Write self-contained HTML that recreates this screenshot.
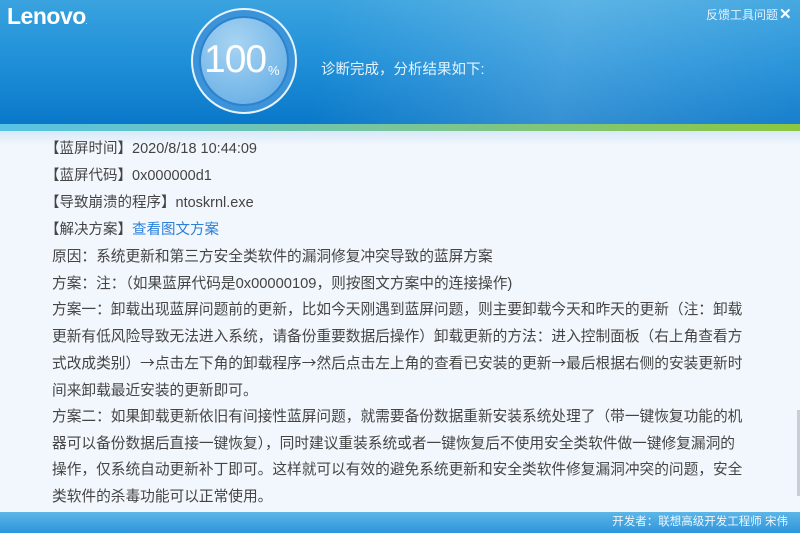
<!DOCTYPE html>
<html><head><meta charset="utf-8"><style>
*{margin:0;padding:0;box-sizing:border-box}
body{width:800px;height:533px;overflow:hidden;background:#f2f7fd;font-family:"Liberation Sans","Noto Sans CJK SC",sans-serif;position:relative}
.hdr{position:absolute;left:0;top:0;width:800px;height:124px;background:linear-gradient(180deg,#3aa3df 0%,#1f8fd8 50%,#0a78c9 100%);overflow:hidden}
.hdr:before{content:"";position:absolute;inset:0;background:linear-gradient(100deg,rgba(255,255,255,0) 40%,rgba(255,255,255,.18) 70%,rgba(255,255,255,.05) 100%)}
.strip{position:absolute;left:0;top:124px;width:800px;height:7px;background:linear-gradient(90deg,#58c3e6,#79c59a 50%,#8cc63f)}
.shade{position:absolute;left:0;top:131px;width:800px;height:14px;background:linear-gradient(#d8e8f8,#f2f7fd)}
.logo{position:absolute;left:7px;top:3px;color:#fff;font-size:23px;font-weight:bold;letter-spacing:-0.5px}
.fb{position:absolute;left:706px;top:6px;color:#e4f2fc;font-size:12px}
.x{position:absolute;left:779px;top:5px;color:#fff;font-size:15px;font-weight:bold}
.ring{position:absolute;left:191px;top:8px;width:106px;height:106px;border-radius:50%;border:2px solid #e8f4fc;background:#3b93da}
.inner{position:absolute;left:199px;top:16px;width:90px;height:90px;border-radius:50%;background:radial-gradient(circle at 40% 30%,#a8d4f2,#73b6e8 70%,#5aa6e0);border:2px solid #2d82cc}
.num{position:absolute;left:204px;top:38px;color:#fff;font-size:39px;letter-spacing:-1px}
.pct{position:absolute;left:268px;top:63px;color:#fff;font-size:13px}
.msg{position:absolute;left:321px;top:58px;color:#e6f3fc;font-size:14.5px}
.c{position:absolute;left:45px;top:136px;width:760px;color:#444;font-size:14.5px;white-space:nowrap}
.c p{line-height:27px}
.c .b{padding-left:7px;line-height:26.5px;font-size:14.7px}
.ar{font-family:"Noto Sans CJK SC",sans-serif}
a{color:#2b7fd8;text-decoration:none}
.ft{position:absolute;left:0;top:512px;width:800px;height:21px;background:linear-gradient(#5db6e6,#2d95dc);color:#eef7fd;font-size:11.5px;text-align:right;padding-right:12px;line-height:21px}
.sb{position:absolute;left:797px;top:410px;width:3px;height:86px;background:#c8ced6}
</style></head><body>
<div class="hdr"></div>
<div class="logo">Lenovo<span style="font-size:5px">.</span></div>
<div class="fb">反馈工具问题</div><div class="x">✕</div>
<div class="ring"></div><div class="inner"></div>
<div class="num">100</div><div class="pct">%</div>
<div class="msg">诊断完成，分析结果如下:</div>
<div class="strip"></div><div class="shade"></div>
<div class="c">
<p>【蓝屏时间】2020/8/18 10:44:09</p>
<p>【蓝屏代码】0x000000d1</p>
<p>【导致崩溃的程序】ntoskrnl.exe</p>
<p>【解决方案】<a>查看图文方案</a></p>
<div class="b">原因：系统更新和第三方安全类软件的漏洞修复冲突导致的蓝屏方案<br>方案：注：（如果蓝屏代码是0x00000109，则按图文方案中的连接操作)<br>方案一：卸载出现蓝屏问题前的更新，比如今天刚遇到蓝屏问题，则主要卸载今天和昨天的更新（注：卸载<br>更新有低风险导致无法进入系统，请备份重要数据后操作）卸载更新的方法：进入控制面板（右上角查看方<br>式改成类别）<span class="ar">→</span>点击左下角的卸载程序<span class="ar">→</span>然后点击左上角的查看已安装的更新<span class="ar">→</span>最后根据右侧的安装更新时<br>间来卸载最近安装的更新即可。<br>方案二：如果卸载更新依旧有间接性蓝屏问题，就需要备份数据重新安装系统处理了（带一键恢复功能的机<br>器可以备份数据后直接一键恢复），同时建议重装系统或者一键恢复后不使用安全类软件做一键修复漏洞的<br>操作，仅系统自动更新补丁即可。这样就可以有效的避免系统更新和安全类软件修复漏洞冲突的问题，安全<br>类软件的杀毒功能可以正常使用。</div>
</div>
<div class="sb"></div>
<div class="ft">开发者：联想高级开发工程师 宋伟</div>
</body></html>
